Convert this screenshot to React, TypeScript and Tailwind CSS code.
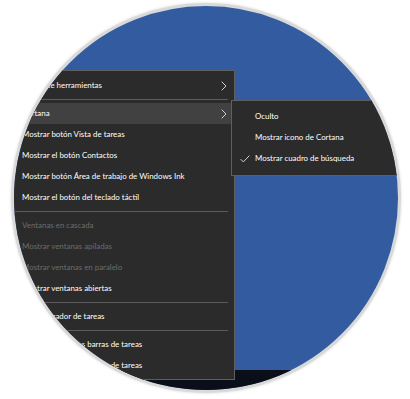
import React from "react";

type Item = { label: string; disabled?: boolean; arrow?: boolean; active?: boolean } | "sep";

const menu: Item[] = [
  { label: "Barras de herramientas", arrow: true },
  "sep",
  { label: "Cortana", arrow: true, active: true },
  { label: "Mostrar botón Vista de tareas" },
  { label: "Mostrar el botón Contactos" },
  { label: "Mostrar botón Área de trabajo de Windows Ink" },
  { label: "Mostrar el botón del teclado táctil" },
  "sep",
  { label: "Ventanas en cascada", disabled: true },
  { label: "Mostrar ventanas apiladas", disabled: true },
  { label: "Mostrar ventanas en paralelo", disabled: true },
  { label: "Mostrar ventanas abiertas" },
  "sep",
  { label: "Administrador de tareas" },
  "sep",
  { label: "Bloquear todas las barras de tareas" },
  { label: "Configuración de la barra de tareas" },
];

const sub = [
  { label: "Oculto" },
  { label: "Mostrar icono de Cortana" },
  { label: "Mostrar cuadro de búsqueda", checked: true },
];

function Chevron() {
  return (
    <svg width="6" height="10" viewBox="0 0 6 10" className="shrink-0">
      <path d="M0.7 0.7 L5 5 L0.7 9.3" fill="none" stroke="#cfcfcf" strokeWidth="1" />
    </svg>
  );
}

export default function App() {
  return (
    <div className="relative w-[410px] h-[399px] bg-white overflow-hidden font-['Lato',sans-serif]">
      <div className="absolute left-[11px] top-[3px] w-[390px] h-[390px] rounded-full overflow-hidden border-[3px] border-[#d9d9d9] shadow-[0_0_3px_rgba(0,0,0,0.15)] bg-[#335ca0] flex flex-col">
        <div className="flex-1" />
        <div className="h-[20px] bg-[#0a0e18]" />

        {/* context menu */}
        <div className="absolute left-[-24px] top-[64px] w-[245px] bg-[#2b2b2b] border border-[#5f5f5f] pt-[4px] pb-[3px] text-[7.9px] text-white">
          {menu.map((it, i) =>
            it === "sep" ? (
              <div key={i} className="h-[7px] flex items-center pl-[8px] pr-[6px]">
                <div className="h-px w-full bg-[#5c5c5c]" />
              </div>
            ) : (
              <div
                key={i}
                className={`h-[21px] flex items-center justify-between pl-[31px] pr-[7px] ${
                  it.active ? "bg-[#414141]" : ""
                } ${it.disabled ? "text-[#6b6b6b]" : ""}`}
              >
                <span className="whitespace-nowrap">{it.label}</span>
                {it.arrow && <Chevron />}
              </div>
            )
          )}
        </div>

        {/* submenu */}
        <div className="absolute left-[217px] top-[94px] w-[200px] bg-[#2b2b2b] border border-[#5f5f5f] pt-[5px] pb-[6px] text-[7.9px] text-white">
          {sub.map((s, i) => (
            <div key={i} className="relative h-[21px] flex items-center pl-[23px]">
              {s.checked && (
                <svg width="10" height="8" viewBox="0 0 10 8" className="absolute left-[8px] top-[7px]">
                  <path d="M0.6 4.2 L3.3 6.9 L9.4 0.6" fill="none" stroke="#d0d0d0" strokeWidth="1" />
                </svg>
              )}
              <span className="whitespace-nowrap">{s.label}</span>
            </div>
          ))}
        </div>
      </div>
    </div>
  );
}
